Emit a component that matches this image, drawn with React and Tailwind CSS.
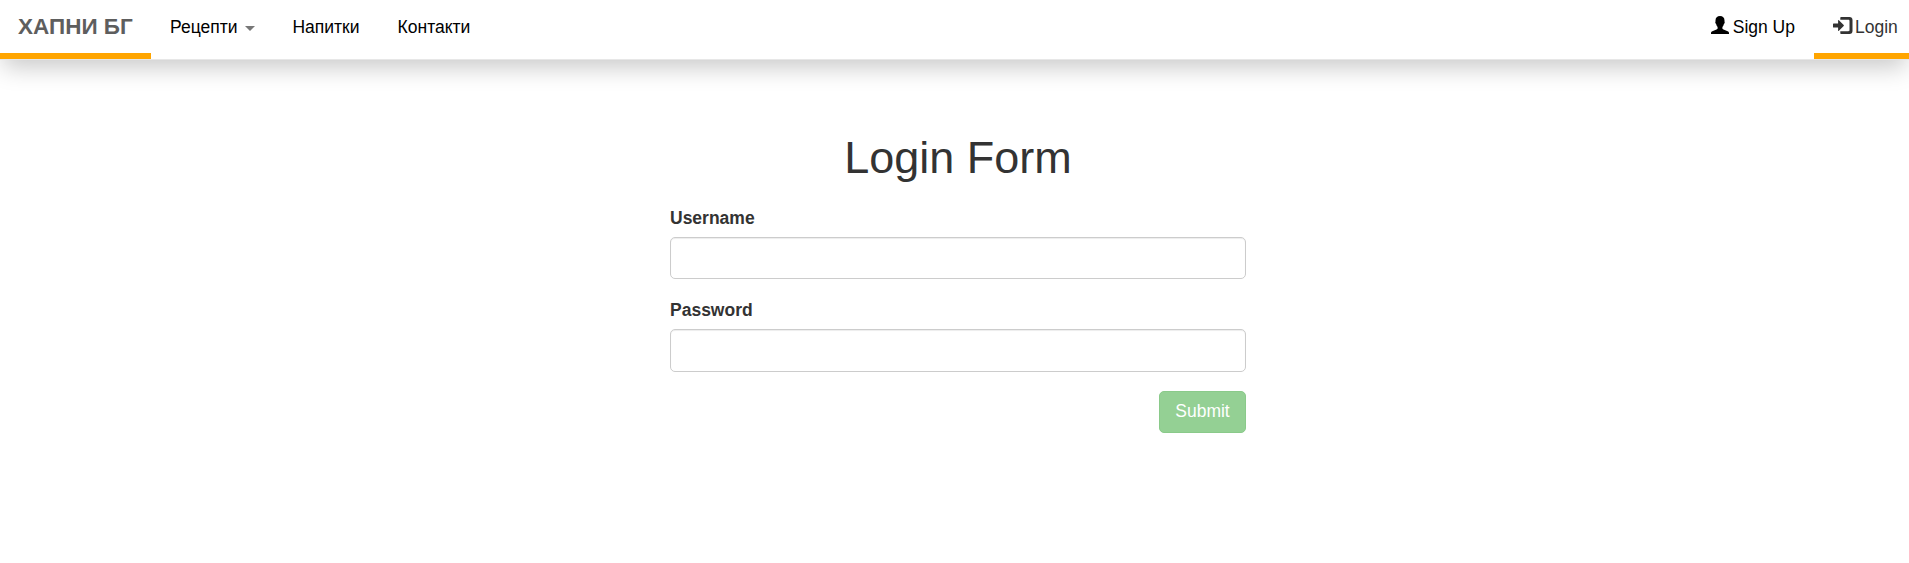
function UserIcon() {
  return (
    <svg className="h-[18px] w-[18px]" viewBox="0 0 18 18" fill="currentColor">
      <path d="M9 0C6.200 0 4.500 1.600 4.500 4.400v1.200c-.3.300-.3.900-.1 1.500.1.500.4.800.7 1 .3 1.200.8 2.200 1.500 2.900v1.300c0 .7-.4 1-1.100 1.300L1.400 15.200C.5 15.600 0 16.100 0 16.900V18h18v-1.100c0-.8-.5-1.300-1.400-1.700l-4.100-1.600c-.7-.3-1.100-.6-1.100-1.300V11c.7-.7 1.200-1.700 1.500-2.900.3-.2.600-.5.700-1 .2-.6.200-1.200-.1-1.500V4.400C13.500 1.600 11.800 0 9 0z" />
    </svg>
  );
}

function LogInIcon() {
  return (
    <svg className="h-[17px] w-[20px]" viewBox="0 0 20 17" fill="currentColor">
      <path d="M7.300 1c0-.6.400-1 1-1h8.200C18.400 0 19.500 1.100 19.500 3v11c0 1.900-1.100 3-3 3H8.300c-.6 0-1-.4-1-1v-1.700h8c.8 0 1.200-.4 1.200-1.200V3.900c0-.8-.4-1.200-1.200-1.200h-8z" />
      <path d="M0 7c0-.4.200-.6.600-.6h4.500V3.500c0-.6.400-.7.800-.3l4.800 4.800c.3.300.3.700 0 1l-4.800 4.800c-.4.400-.8.300-.8-.3v-2.900H.6c-.4 0-.6-.2-.6-.6z" />
    </svg>
  );
}

function Field({ label, type, height }) {
  return (
    <label className="mb-[19px] block">
      <span className="mb-[6px] block font-bold">{label}</span>
      <input
        type={type}
        className={`block w-full rounded-[5px] border border-[#ccc] bg-white px-[15px] shadow-[inset_0_1px_1px_rgba(0,0,0,0.075)] outline-none ${height}`}
      />
    </label>
  );
}

export default function App() {
  return (
    <div className="min-h-[563px] bg-white font-['Liberation_Sans',Arial,sans-serif] text-[17.500px] leading-[25px] text-[#333]">
      <nav className="flex h-[60px] items-start justify-between border-b border-[#e7e7e7] bg-white shadow-[0_10px_25px_-3px_rgba(0,0,0,0.22)]">
        <div className="flex">
          <a className="h-[59px] w-[151px] border-b-6 border-[orange] pt-[14px] pl-[18px] text-[22.500px] font-bold whitespace-nowrap text-[#5e5e5e]">ХАПНИ БГ</a>
          <a className="flex items-start pt-[15px] pl-[19px] text-black">
            Рецепти
            <span className="mt-[11px] ml-[8px] border-x-5 border-t-5 border-x-transparent border-t-[#777]" />
          </a>
          <a className="pt-[15px] pl-[37px] text-black">Напитки</a>
          <a className="pt-[15px] pl-[38px] text-black">Контакти</a>
        </div>
        <div className="flex">
          <a className="flex pt-[15px] pr-[19px] text-black">
            <span className="mt-px mr-[4px]"><UserIcon /></span>Sign Up
          </a>
          <a className="flex h-[59px] w-[95px] border-b-6 border-[orange] pt-[15px] pl-[19px]">
            <span className="mt-[2px] mr-[2px]"><LogInIcon /></span>Login
          </a>
        </div>
      </nav>
      <div className="flex justify-center pt-[73px] pl-[7px]">
        <form className="w-[576px]">
          <h1 className="mb-[24px] text-center text-[45px] leading-[49px] font-normal">Login Form</h1>
          <Field label="Username" type="text" height="h-[42px]" />
          <Field label="Password" type="password" height="h-[43px]" />
          <div className="flex justify-end">
            <button
              type="button"
              disabled
              className="h-[42px] w-[87px] rounded-[5px] border border-[#4cae4c] bg-[#5cb85c] pb-[2px] text-white opacity-65"
            >
              Submit
            </button>
          </div>
        </form>
      </div>
    </div>
  );
}
